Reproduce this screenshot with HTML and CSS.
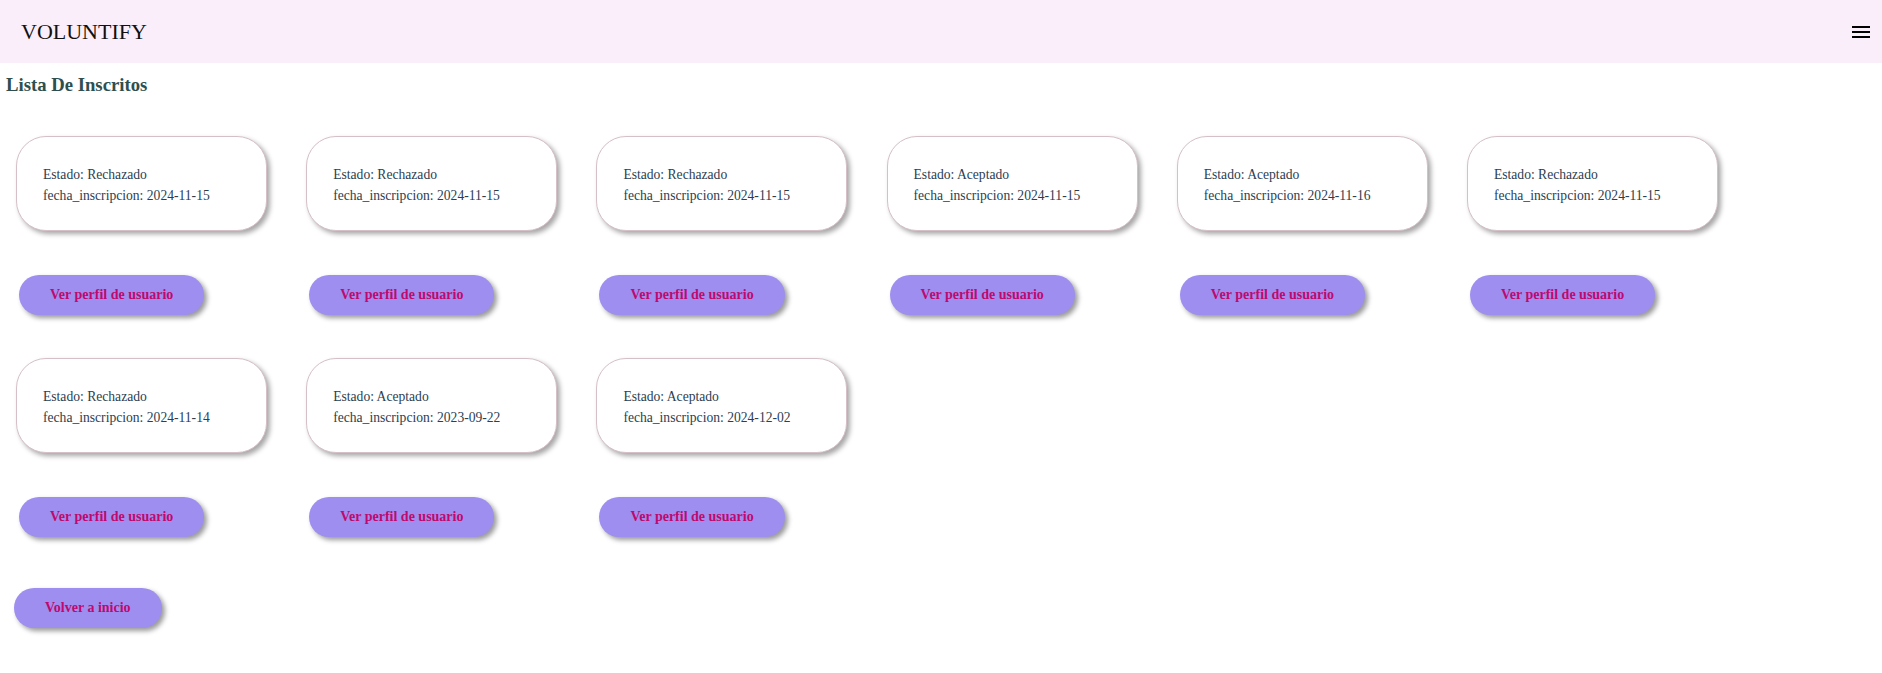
FILE: index.html
```html
<!DOCTYPE html>
<html lang="es">
<head>
<meta charset="utf-8">
<title>Voluntify - Lista De Inscritos</title>
<link rel="stylesheet" href="styles.css">
</head>
<body>
<header class="topbar">
  <span class="brand">VOLUNTIFY</span>
  <button class="menu-btn" aria-label="Menú">
    <svg width="24" height="24" viewBox="0 0 24 24"><path d="M3 18h18v-2H3v2zm0-5h18v-2H3v2zm0-7v2h18V6H3z" fill="#000"/></svg>
  </button>
</header>
<main class="content">
  <h3 class="title">Lista De Inscritos</h3>
  <div class="list">
    <div class="item">
      <div class="card"><p>Estado: Rechazado</p><p>fecha_inscripcion: 2024-11-15</p></div>
      <button class="pill item-btn">Ver perfil de usuario</button>
    </div>
    <div class="item">
      <div class="card"><p>Estado: Rechazado</p><p>fecha_inscripcion: 2024-11-15</p></div>
      <button class="pill item-btn">Ver perfil de usuario</button>
    </div>
    <div class="item">
      <div class="card"><p>Estado: Rechazado</p><p>fecha_inscripcion: 2024-11-15</p></div>
      <button class="pill item-btn">Ver perfil de usuario</button>
    </div>
    <div class="item">
      <div class="card"><p>Estado: Aceptado</p><p>fecha_inscripcion: 2024-11-15</p></div>
      <button class="pill item-btn">Ver perfil de usuario</button>
    </div>
    <div class="item">
      <div class="card"><p>Estado: Aceptado</p><p>fecha_inscripcion: 2024-11-16</p></div>
      <button class="pill item-btn">Ver perfil de usuario</button>
    </div>
    <div class="item">
      <div class="card"><p>Estado: Rechazado</p><p>fecha_inscripcion: 2024-11-15</p></div>
      <button class="pill item-btn">Ver perfil de usuario</button>
    </div>
    <div class="item">
      <div class="card"><p>Estado: Rechazado</p><p>fecha_inscripcion: 2024-11-14</p></div>
      <button class="pill item-btn">Ver perfil de usuario</button>
    </div>
    <div class="item">
      <div class="card"><p>Estado: Aceptado</p><p>fecha_inscripcion: 2023-09-22</p></div>
      <button class="pill item-btn">Ver perfil de usuario</button>
    </div>
    <div class="item">
      <div class="card"><p>Estado: Aceptado</p><p>fecha_inscripcion: 2024-12-02</p></div>
      <button class="pill item-btn">Ver perfil de usuario</button>
    </div>
  </div>
  <button class="pill back-btn">Volver a inicio</button>
</main>
</body>
</html>
```
FILE: styles.css
```css
html, body {
  margin: 0;
  padding: 0;
  background: #ffffff;
  font-family: "Liberation Serif", "Times New Roman", serif;
}

.topbar {
  height: 63px;
  background: #fbeefb;
  display: flex;
  align-items: center;
  justify-content: space-between;
  padding: 0 9px 0 21px;
}

.brand {
  font-size: 22px;
  color: #111111;
}

.menu-btn {
  border: none;
  background: transparent;
  padding: 0;
  width: 24px;
  height: 24px;
  display: flex;
  margin-top: 1px;
}

.content {
  padding-bottom: 40px;
}

.title {
  margin: 11px 0 0 6px;
  font-size: 18.72px;
  line-height: 22px;
  font-weight: bold;
  color: #2f4f4f;
}

.list {
  display: flex;
  flex-wrap: wrap;
  column-gap: 39.2px;
  row-gap: 43px;
  padding: 40px 0 0 16px;
}

.item {
  width: 251px;
  display: flex;
  flex-direction: column;
  align-items: flex-start;
}

.card {
  box-sizing: border-box;
  width: 251px;
  border: 1px solid #d6c0c8;
  border-radius: 30px;
  background: #ffffff;
  box-shadow: 3px 3px 5px rgba(0, 0, 0, 0.35);
  padding: 27px 26px 24px;
  color: #2c3e50;
  font-size: 13.6px;
  line-height: 21px;
}

.card p {
  margin: 0;
}

.pill {
  border: none;
  height: 40px;
  padding: 0 31px;
  border-radius: 20px;
  background: #9e8eef;
  color: #c0086e;
  font-family: "Liberation Serif", "Times New Roman", serif;
  font-size: 14px;
  font-weight: bold;
  line-height: 40px;
  box-shadow: 3px 3px 5px rgba(0, 0, 0, 0.4);
}

.item-btn {
  margin: 44px 0 0 3px;
}

.back-btn {
  margin: 51px 0 0 14px;
}
```
